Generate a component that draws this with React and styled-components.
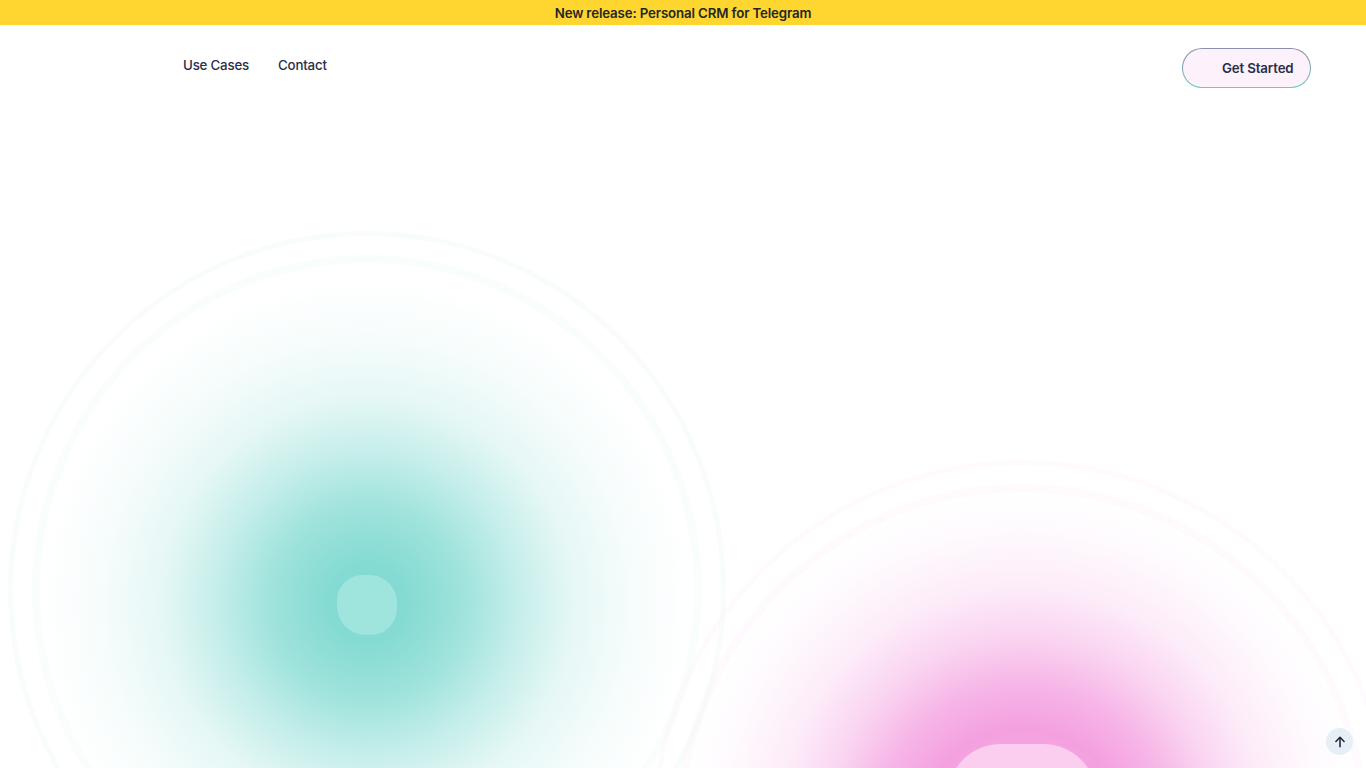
import React from "react";
import styled, { createGlobalStyle } from "styled-components";

const Global = createGlobalStyle`
  html, body { margin: 0; padding: 0; background: #ffffff; }
  body { font-family: Inter, "Noto Sans", sans-serif; overflow: hidden; }
  * { box-sizing: border-box; }
`;

const Page = styled.div`
  width: 1366px;
  height: 768px;
  display: flex;
  flex-direction: column;
  position: relative;
  overflow: hidden;
`;

const Banner = styled.div`
  height: 25px;
  background: #ffd62f;
  display: flex;
  align-items: center;
  justify-content: center;
  font-family: Inter, sans-serif;
  font-size: 13.3px;
  font-weight: 600;
  color: #262626;
  letter-spacing: -0.15px;
`;

const Header = styled.header`
  display: flex;
  align-items: flex-start;
  justify-content: space-between;
  padding: 23px 55px 0 183px;
  height: 87px;
  position: relative;
  z-index: 2;
`;

const Nav = styled.nav`
  display: flex;
  gap: 29px;
  padding-top: 9px;
`;

const NavLink = styled.a`
  font-family: Inter, sans-serif;
  font-size: 13.3px;
  font-weight: 500;
  color: #2b2e4a;
  text-decoration: none;
  letter-spacing: -0.2px;
`;

const CtaButton = styled.button`
  height: 40px;
  width: 129px;
  border-radius: 20px;
  border: 1px solid transparent;
  background:
    linear-gradient(#fdf2fb, #fdf2fb) padding-box,
    linear-gradient(180deg, #8a8fa8 0%, #7aa8b6 60%, #5fcfc0 100%) border-box;
  font-family: Inter, sans-serif;
  font-size: 13.3px;
  font-weight: 600;
  letter-spacing: -0.15px;
  color: #2b2e4a;
  padding: 0 16px 0 39px;
  text-align: left;
  cursor: pointer;
  white-space: nowrap;
`;

const Hero = styled.section`
  flex: 1;
  position: relative;
`;

/* a decorative orb: outer faint ring > inner faint ring > glow > core */
const Orb = styled.div`
  position: absolute;
  left: ${(p) => p.$x - p.$r}px;
  top: ${(p) => p.$y - p.$r}px;
  width: ${(p) => p.$r * 2}px;
  height: ${(p) => p.$r * 2}px;
  border-radius: 50%;
  border: 5px solid ${(p) => p.$ring};
  padding: 19px;
  display: flex;
`;

const InnerRing = styled.div`
  flex: 1;
  border-radius: 50%;
  border: 8px solid ${(p) => p.$ring};
  display: flex;
`;

const Glow = styled.div`
  flex: 1;
  border-radius: 50%;
  background: ${(p) => p.$bg};
  display: flex;
  align-items: center;
  justify-content: center;
  padding-top: ${(p) => p.$shiftDown}px;
  padding-bottom: ${(p) => p.$shiftUp}px;
`;

const Core = styled.div`
  width: ${(p) => p.$s}px;
  height: ${(p) => p.$s}px;
  border-radius: ${(p) => p.$round};
  background: ${(p) => p.$c};
`;

const ScrollTop = styled.button`
  position: absolute;
  right: 13px;
  bottom: 13px;
  width: 27px;
  height: 27px;
  border-radius: 50%;
  border: none;
  background: #e6eef6;
  display: flex;
  align-items: center;
  justify-content: center;
  padding: 0;
  z-index: 3;
`;

const teal = "126,217,208";
const pink = "244,160,224";

export default function App() {
  return (
    <>
      <Global />
      <Page>
        <Banner>New release: Personal CRM for Telegram</Banner>
        <Header>
          <Nav>
            <NavLink href="#">Use Cases</NavLink>
            <NavLink href="#">Contact</NavLink>
          </Nav>
          <CtaButton>Get Started</CtaButton>
        </Header>
        <Hero>
          <Orb $x={367} $y={590 - 112} $r={359} $ring="rgba(238,247,246,0.4)">
            <InnerRing $ring="rgba(236,247,245,0.3)">
              <Glow
                $shiftDown={30}
                $shiftUp={0}
                $bg={`radial-gradient(circle at 50% 52%, rgba(${teal},1) 0px, rgba(${teal},0.95) 40px, rgba(${teal},0.75) 95px, rgba(${teal},0.45) 150px, rgba(${teal},0.2) 205px, rgba(${teal},0.07) 265px, rgba(${teal},0) 325px)`}
              >
                <Core $s={60} $c="#9fe4dd" $round="42% 46% 44% 48%" />
              </Glow>
            </InnerRing>
          </Orb>

          <Orb $x={1022} $y={830 - 112} $r={370} $ring="rgba(253,244,251,0.45)">
            <InnerRing $ring="rgba(252,241,250,0.35)">
              <Glow
                $shiftDown={0}
                $shiftUp={22}
                $bg={`radial-gradient(circle closest-side, rgba(${pink},0.75) 0%, rgba(${pink},1) 30%, rgba(${pink},0.78) 43%, rgba(${pink},0.45) 57%, rgba(${pink},0.2) 72%, rgba(${pink},0.06) 88%, rgba(${pink},0) 100%)`}
              >
                <Core $s={150} $c="#fbcdef" $round="36% 36% 44% 44%" />
              </Glow>
            </InnerRing>
          </Orb>
        </Hero>
        <ScrollTop aria-label="Scroll to top">
          <svg width="14" height="14" viewBox="0 0 24 24" fill="none" stroke="#1e2233" strokeWidth="2.6" strokeLinecap="round" strokeLinejoin="round">
            <path d="M12 20V5" />
            <path d="M5 11l7-7 7 7" />
          </svg>
        </ScrollTop>
      </Page>
    </>
  );
}
